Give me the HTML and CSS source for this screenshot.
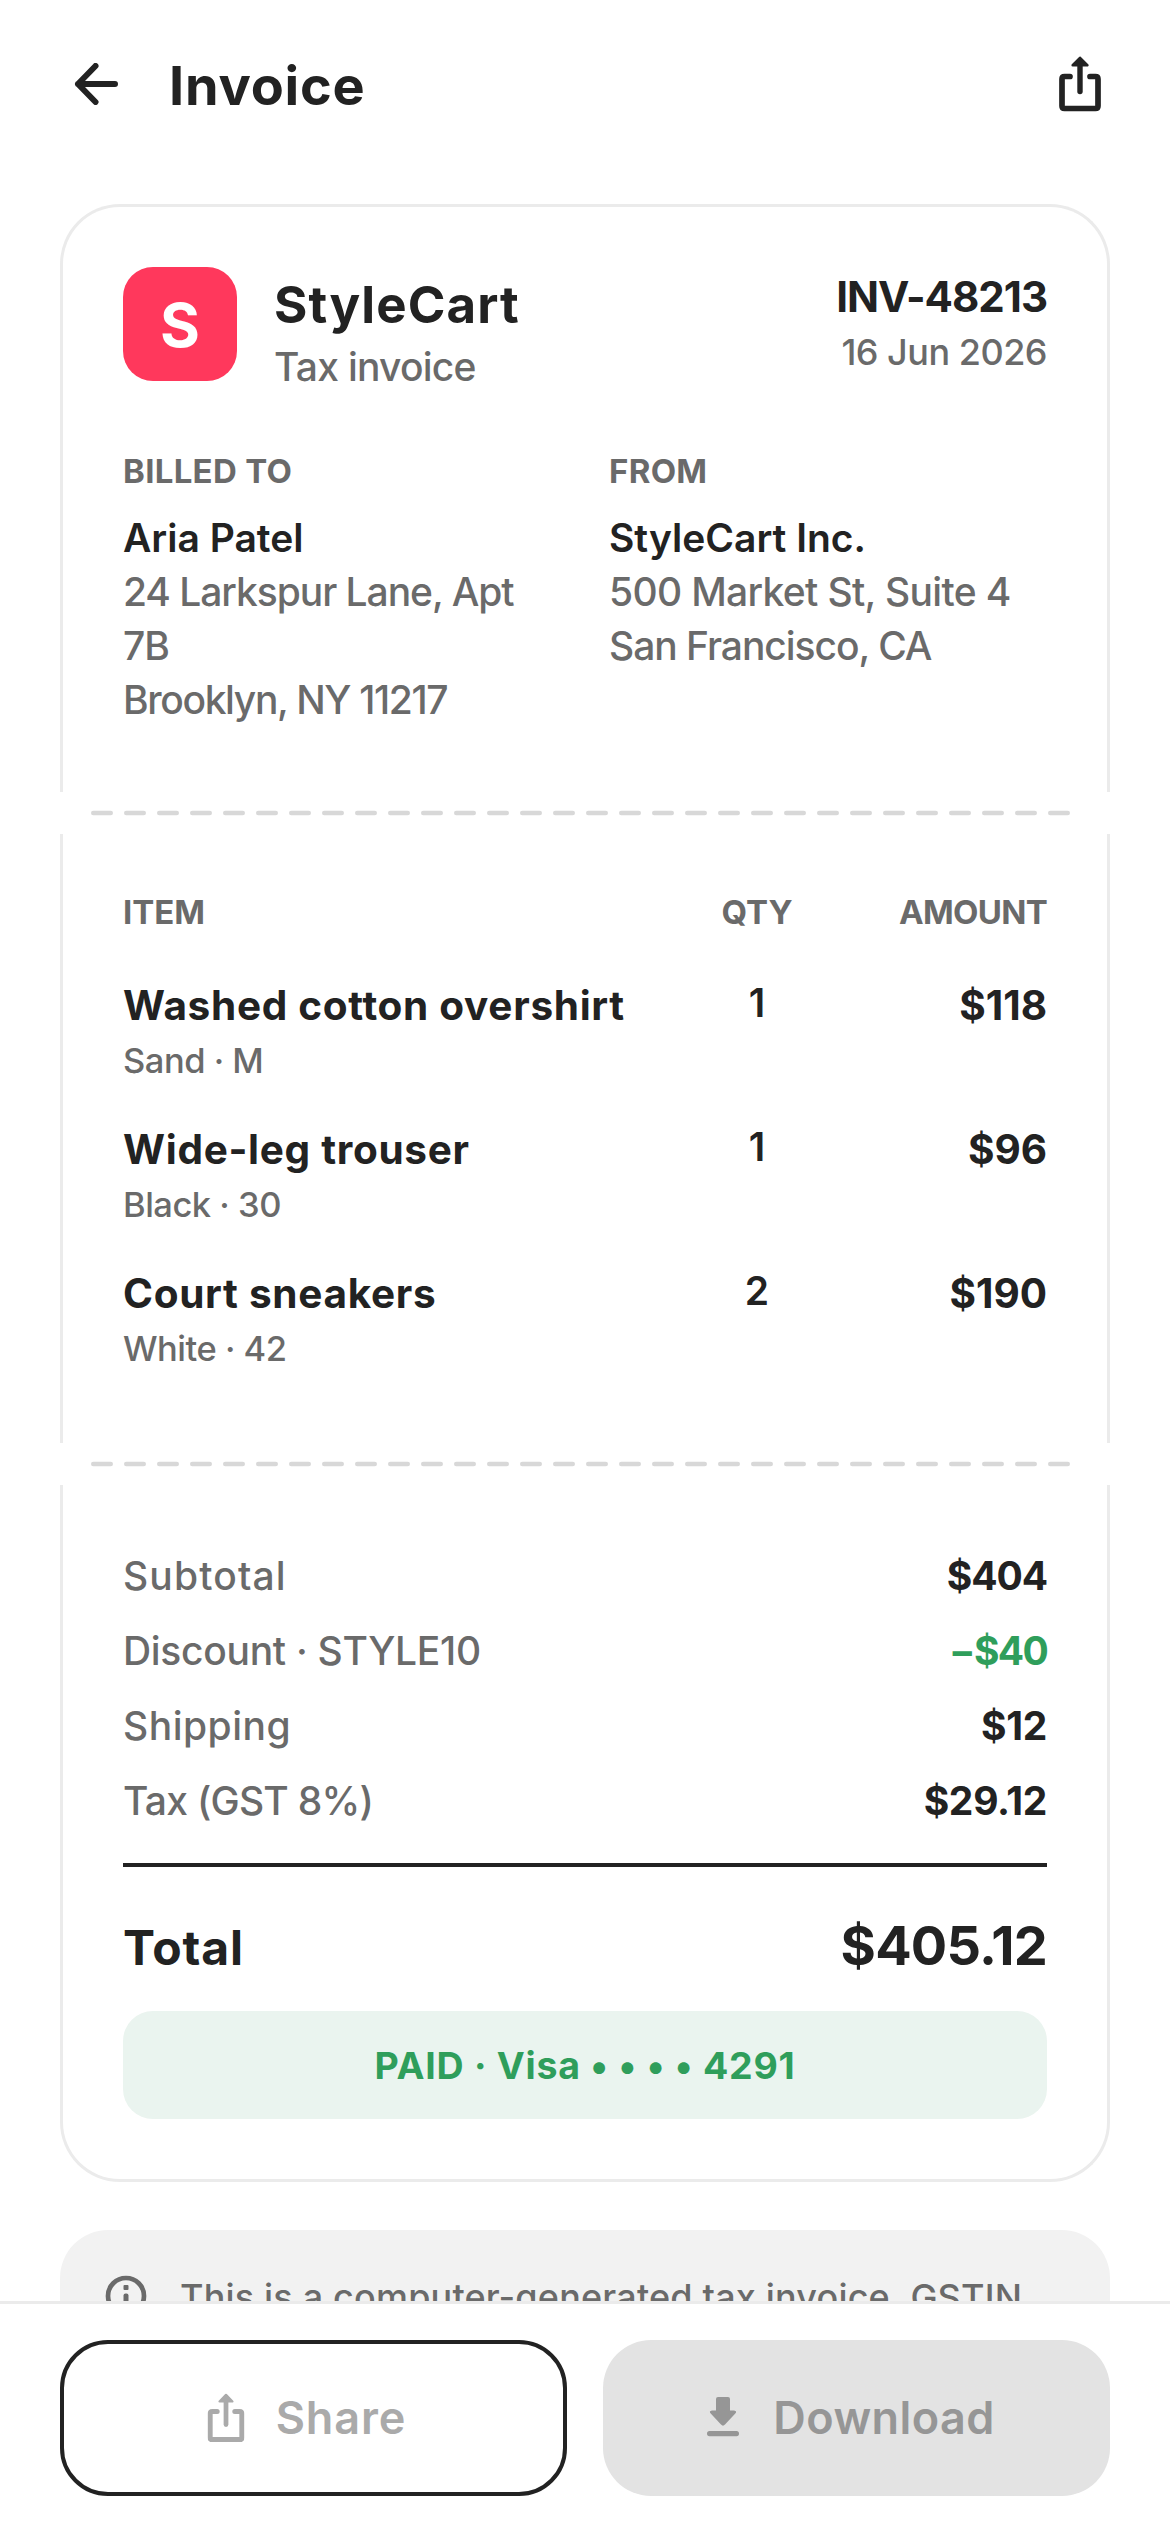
FILE: index.html
```html
<!DOCTYPE html>
<html lang="en">
<head>
<meta charset="utf-8">
<title>Invoice</title>
<link rel="stylesheet" href="styles.css">
</head>
<body>
<svg class="defs" aria-hidden="true">
  <symbol id="share" viewBox="0 0 42 56">
    <path d="M11 20.500H5.500Q3 20.500 3 23V50Q3 52.500 5.500 52.500H36.500Q39 52.500 39 50V23Q39 20.500 36.500 20.500H31" fill="none" stroke="currentColor" stroke-width="5.700" stroke-linecap="round"/>
    <path d="M21 8V35.500" stroke="currentColor" stroke-width="5.400" stroke-linecap="round"/>
    <path d="M21 1.800L28.300 9.200H13.700Z" fill="currentColor" stroke="currentColor" stroke-width="2.600" stroke-linejoin="round"/>
  </symbol>
</svg>
<header class="topbar">
  <svg class="back" viewBox="0 0 44 42" fill="none" stroke="currentColor" stroke-width="6" stroke-linecap="round" stroke-linejoin="round"><path d="M41 21H4M21.500 3L4 21L21.500 39"/></svg>
  <h1 class="title">Invoice</h1>
  <svg class="share-top" viewBox="0 0 42 56"><use href="#share"/></svg>
</header>
<main class="content">
  <article class="invoice">
    <section class="part part-top">
      <div class="brand">
        <div class="logo">S</div>
        <div class="brand-text">
          <div class="brand-name">StyleCart</div>
          <div class="brand-sub">Tax invoice</div>
        </div>
        <div class="meta">
          <div class="number">INV-48213</div>
          <div class="date">16 Jun 2026</div>
        </div>
      </div>
      <div class="parties">
        <div>
          <div class="label">BILLED TO</div>
          <div class="party">Aria Patel</div>
          <div class="address">24 Larkspur Lane, Apt 7B</div>
          <div class="address city-ny">Brooklyn, NY 11217</div>
        </div>
        <div>
          <div class="label">FROM</div>
          <div class="party">StyleCart Inc.</div>
          <div class="address street">500 Market St, Suite 4</div>
          <div class="address">San Francisco, CA</div>
        </div>
      </div>
    </section>
    <div class="perforation"><svg viewBox="0 0 980 6"><path d="M2.200 3H978"/></svg></div>
    <section class="part part-items">
      <div class="row head"><div>ITEM</div><div class="qty-h">QTY</div><div class="amt-h">AMOUNT</div></div>
      <div class="row"><div><div class="name">Washed cotton overshirt</div><div class="variant">Sand · M</div></div><div class="qty">1</div><div class="amount">$118</div></div>
      <div class="row"><div><div class="name">Wide-leg trouser</div><div class="variant">Black · 30</div></div><div class="qty">1</div><div class="amount">$96</div></div>
      <div class="row"><div><div class="name">Court sneakers</div><div class="variant">White · 42</div></div><div class="qty">2</div><div class="amount">$190</div></div>
    </section>
    <div class="perforation"><svg viewBox="0 0 980 6"><path d="M2.200 3H978"/></svg></div>
    <section class="part part-totals">
      <div class="sums">
        <div class="sum"><span class="subtotal">Subtotal</span><b class="tight">$404</b></div>
        <div class="sum"><span class="discount">Discount · STYLE10</span><b class="green">−$40</b></div>
        <div class="sum"><span class="shipping">Shipping</span><b>$12</b></div>
        <div class="sum"><span class="tax">Tax (GST 8%)</span><b>$29.12</b></div>
      </div>
      <div class="total"><span class="total-label">Total</span><span class="total-value">$405.12</span></div>
      <div class="paid">PAID · Visa • • • • 4291</div>
    </section>
  </article>
  <aside class="note">
    <svg class="info" viewBox="0 0 42 42"><circle cx="21" cy="21" r="18" fill="none" stroke="currentColor" stroke-width="4.700"/><rect x="18.500" y="10" width="5" height="5" rx="1" fill="currentColor"/><rect x="18.500" y="18.500" width="5" height="13" rx="2" fill="currentColor"/></svg>
    <p class="note-text">This is a computer-generated tax invoice. GSTIN</p>
  </aside>
</main>
<footer class="actions">
  <button class="btn btn-outline"><svg viewBox="0 0 42 50"><use href="#share" x="2.500" y="0" width="37" height="50"/></svg><span class="share-label">Share</span></button>
  <button class="btn btn-fill"><svg viewBox="0 0 42 50"><path d="M16 4H26Q28 4 28 6V17.500H32Q35.500 18 33.300 20.600L23 31.600Q21 33.800 19 31.600L8.700 20.600Q6.500 18 10 17.500H14V6Q14 4 16 4ZM7.500 38H34.500Q37 38 37 40.600T34.500 43.200H7.500Q5 43.200 5 40.600T7.500 38Z" fill="currentColor"/></svg><span class="download-label">Download</span></button>
</footer>
</body>
</html>
```
FILE: styles.css
```css
* { box-sizing: border-box; }
body {
  margin: 0;
  width: 1170px;
  height: 2532px;
  overflow: hidden;
  background: #fff;
  color: #222;
  font-family: Inter, "Liberation Sans", sans-serif;
  font-size: 39px;
  font-weight: 500;
}
svg { display: block; flex: none; }
.defs { position: absolute; width: 0; height: 0; }

.topbar { display: flex; align-items: center; height: 168px; padding: 0 69px 0 74px; }
.back { width: 44px; height: 42px; }
.title { flex: 1; margin: 3px 0 0 51px; font-size: 54px; line-height: 66px; font-weight: 750; letter-spacing: 0.8px; }
.share-top { width: 42px; height: 56px; }

.content { padding: 36px 60px 0; }
.part { border: 0 solid #ebebeb; border-width: 0 3px; padding: 0 60px; }
.part-top { border-top-width: 3px; border-radius: 60px 60px 0 0; padding-top: 60px; padding-bottom: 65px; }
.brand { display: flex; align-items: flex-start; }
.logo { width: 114px; height: 114px; border-radius: 30px; background: #ff385c; color: #fff; font-size: 61px; line-height: 117px; font-weight: 750; text-align: center; }
.brand-text { flex: 1; padding: 4px 0 0 37px; }
.brand-name { font-size: 51px; line-height: 67px; font-weight: 750; letter-spacing: 1.1px; }
.brand-sub { line-height: 57px; color: #6a6a6a; letter-spacing: -0.75px; }
.meta { padding-top: 1px; text-align: right; }
.number { font-size: 42px; line-height: 57px; font-weight: 750; letter-spacing: -1px; }
.date { font-size: 36px; line-height: 54px; color: #6a6a6a; letter-spacing: -0.5px; }

.parties { display: grid; grid-template-columns: 1fr 1fr; gap: 48px; margin-top: 54px; }
.label { margin-bottom: 17px; font-size: 33px; line-height: 45px; font-weight: 700; color: #6a6a6a; letter-spacing: 0.3px; }
.party { line-height: 54px; font-weight: 600; }
.address { line-height: 54px; color: #6a6a6a; letter-spacing: -1.05px; }
.street { letter-spacing: -0.67px; }
.city-ny { letter-spacing: -1.35px; }

.perforation { display: flex; align-items: center; height: 42px; padding-left: 31px; }
.perforation svg { width: 980px; height: 6px; }
.perforation path { stroke: #d8d8d8; stroke-width: 4.4; stroke-linecap: round; stroke-dasharray: 17.6 15.4; }

.part-items { display: grid; gap: 36px; padding-top: 56px; padding-bottom: 70px; }
.row { display: grid; grid-template-columns: 1fr 108px 236px; }
.head { margin-bottom: 6px; font-size: 33px; line-height: 45px; font-weight: 700; color: #6a6a6a; }
.name, .amount { font-size: 40.5px; line-height: 57px; font-weight: 650; letter-spacing: 0.7px; }
.variant { margin-top: 3px; font-size: 34.5px; line-height: 48px; color: #6a6a6a; letter-spacing: -0.5px; }
.qty, .qty-h { text-align: center; }
.qty { line-height: 51px; font-weight: 600; }
.amount, .amt-h { text-align: right; }
.amount { letter-spacing: 0; }
.amt-h { letter-spacing: -0.7px; }

.part-totals { border-bottom-width: 3px; border-radius: 0 0 60px 60px; padding-top: 65px; padding-bottom: 60px; }
.sums { display: grid; gap: 24px; padding-bottom: 37px; border-bottom: 4px solid #222; }
.sum { display: flex; justify-content: space-between; line-height: 51px; color: #6a6a6a; }
.sum b { font-weight: 700; color: #222; letter-spacing: -0.3px; }
.sum .tight { letter-spacing: -1.1px; }
.sum .green { color: #2f9e5b; letter-spacing: -1.7px; }
.subtotal { letter-spacing: 1.15px; }
.discount { letter-spacing: -0.3px; }
.shipping { letter-spacing: 0.5px; }
.tax { letter-spacing: -0.75px; }
.total { display: flex; justify-content: space-between; align-items: baseline; height: 66px; margin: 46px 0 32px; font-weight: 750; line-height: 66px; }
.total-label { font-size: 48px; letter-spacing: 0.9px; }
.total-value { font-size: 54px; letter-spacing: -0.8px; }
.paid { height: 108px; border-radius: 30px; background: #eaf4ef; color: #2f9e5b; font-size: 37.5px; line-height: 110px; font-weight: 700; letter-spacing: 0.75px; text-align: center; }

.note { display: flex; height: 200px; margin-top: 48px; padding: 40px 45px 60px; border-radius: 48px; background: #f2f2f2; color: #6a6a6a; }
.info { width: 42px; height: 42px; margin-top: 5px; }
.note-text { margin: 0 0 0 33px; font-size: 36px; line-height: 55px; letter-spacing: 0.18px; white-space: nowrap; }

.actions { position: fixed; left: 0; bottom: 0; display: grid; grid-template-columns: 1fr 1fr; gap: 36px; width: 1170px; height: 231px; padding: 36px 60px; border-top: 3px solid #ebebeb; background: #fff; }
.btn { display: flex; align-items: center; justify-content: center; gap: 29px; height: 156px; padding: 0 16px 0 0; border: 0; border-radius: 48px; font: 600 45px/60px Inter, sans-serif; }
.btn svg { width: 42px; height: 50px; }
.btn-outline { border: 4px solid #222; background: #fff; color: #aaa; }
.btn-fill { background: #e3e3e3; color: #969696; }
.share-label { letter-spacing: 0.9px; }
.download-label { letter-spacing: 0.4px; }
```
